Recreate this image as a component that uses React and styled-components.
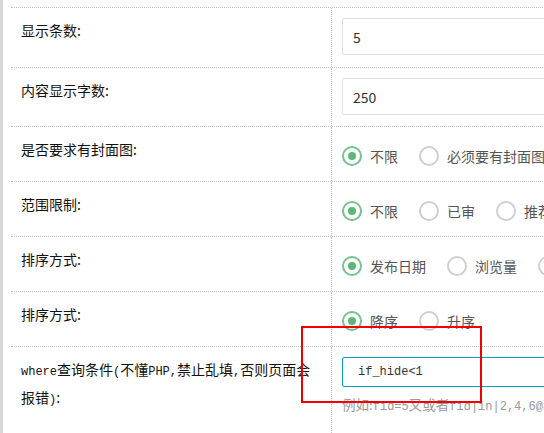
import styled, { createGlobalStyle } from 'styled-components';

const GlobalStyle = createGlobalStyle`
  html, body {
    margin: 0;
    padding: 0;
    background: #fff;
    overflow: hidden;
  }
  body {
    font-family: "Noto Sans CJK SC", "Liberation Sans", sans-serif;
    color: #111;
  }
`;

const Page = styled.div`
  position: relative;
  display: flex;
  width: 544px;
  height: 433px;
  overflow: hidden;
`;

const SideStrip = styled.div`
  flex: 0 0 3px;
  background: #d6d6d6;
`;

const Content = styled.div`
  flex: 1;
  padding: 7px 0 0 8px;
  min-width: 0;
`;

const Table = styled.div`
  display: flex;
  flex-direction: column;
  width: 640px;
`;

const Row = styled.div`
  display: grid;
  grid-template-columns: 320px 1fr;
  border-top: 1px dotted #c4c4c4;
`;

const Label = styled.div`
  padding: 10px 10px 0 10px;
  font-size: 14px;
  line-height: 25px;
  color: #111;
`;

const Field = styled.div`
  border-left: 1px dotted #c4c4c4;
  padding: ${(p) => p.$pad || '19px 0 15px 10px'};
  white-space: nowrap;
  overflow: hidden;
`;

const TextInput = styled.div`
  box-sizing: border-box;
  width: 300px;
  height: ${(p) => (p.$focus ? '30px' : '37px')};
  border: 1px solid ${(p) => (p.$focus ? '#0a9dc7' : '#dedede')};
  border-radius: 2px;
  padding: 0 ${(p) => (p.$focus ? '15px' : '10px')};
  display: flex;
  align-items: center;
  font-family: ${(p) =>
    p.$focus ? '"Liberation Mono", monospace' : '"Noto Sans CJK SC", sans-serif'};
  font-size: ${(p) => (p.$focus ? '12px' : '14px')};
  color: #333;
`;

const Hint = styled.div`
  margin-top: 7px;
  font-size: 13.5px;
  line-height: 20px;
  color: #999;
  white-space: nowrap;
`;

// ASCII in the original renders as half-width bitmap glyphs
const Mono = styled.span`
  font-family: "Liberation Mono", monospace;
  font-size: 12px;
`;

const RadioGroup = styled.div`
  display: flex;
  align-items: center;
  height: 20px;
`;

const Option = styled.label`
  display: flex;
  align-items: center;
  gap: 8px;
  margin-right: 21px;
  font-size: 14px;
  color: #555;
  flex-shrink: 0;
`;

const Circle = styled.span`
  box-sizing: border-box;
  width: 20px;
  height: 20px;
  border-radius: 50%;
  border: 2px solid ${(p) => (p.$on ? '#72c48c' : '#cfcfcf')};
  display: flex;
  align-items: center;
  justify-content: center;
  flex-shrink: 0;

  &::after {
    content: '';
    width: 8px;
    height: 8px;
    border-radius: 50%;
    background: ${(p) => (p.$on ? '#5cb877' : 'transparent')};
  }
`;

const Annotation = styled.div`
  position: absolute;
  left: 301px;
  top: 326px;
  width: 181px;
  height: 77px;
  box-sizing: border-box;
  border: 2px solid #f20000;
  pointer-events: none;
`;

const radioRows = [
  { label: '是否要求有封面图:', options: ['不限', '必须要有封面图'] },
  { label: '范围限制:', options: ['不限', '已审', '推荐'] },
  { label: '排序方式:', options: ['发布日期', '浏览量', '评论数'] },
  { label: '排序方式:', options: ['降序', '升序'] },
];

function Radios({ options }) {
  return (
    <RadioGroup>
      {options.map((o, i) => (
        <Option key={o}>
          <Circle $on={i === 0} />
          {o}
        </Option>
      ))}
    </RadioGroup>
  );
}

export default function App() {
  return (
    <>
      <GlobalStyle />
      <Page>
        <SideStrip />
        <Content>
          <Table>
            <Row>
              <Label>显示条数:</Label>
              <Field $pad="10px 0 12px 10px">
                <TextInput>5</TextInput>
              </Field>
            </Row>
            <Row>
              <Label>内容显示字数:</Label>
              <Field $pad="10px 0 11px 10px">
                <TextInput>250</TextInput>
              </Field>
            </Row>
            {radioRows.map((r, i) => (
              <Row key={i}>
                <Label>{r.label}</Label>
                <Field>
                  <Radios options={r.options} />
                </Field>
              </Row>
            ))}
            <Row>
              <Label>
                <Mono>where</Mono>查询条件<Mono>(</Mono>不懂<Mono>PHP,</Mono>禁止乱填<Mono>,</Mono>否则页面会报错<Mono>)</Mono>:
              </Label>
              <Field $pad="10px 0 20px 10px">
                <TextInput $focus>if_hide&lt;1</TextInput>
                <Hint>
                  例如:<Mono>fid=5</Mono>又或者<Mono>fid|in|2,4,6@8</Mono>
                </Hint>
              </Field>
            </Row>
          </Table>
        </Content>
        <Annotation />
      </Page>
    </>
  );
}
